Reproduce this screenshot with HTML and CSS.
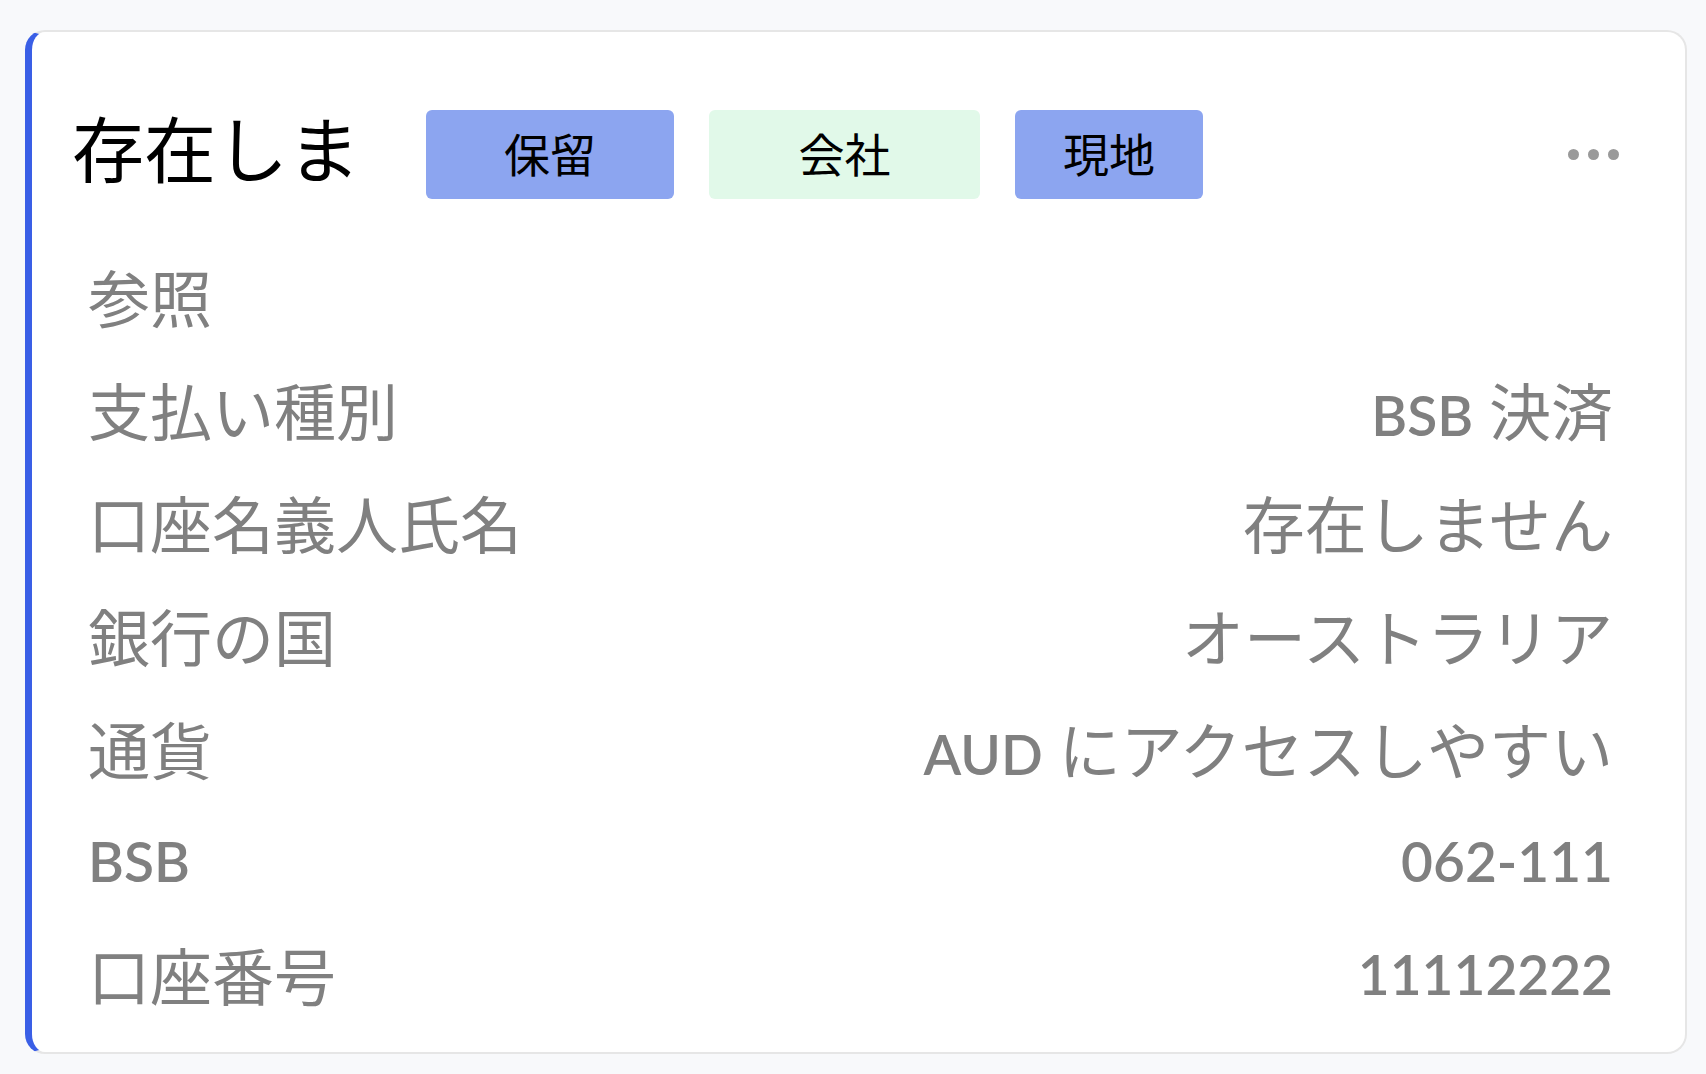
FILE: index.html
```html
<!DOCTYPE html>
<html lang="ja">

<head>
    <meta charset="UTF-8">
    <meta name="viewport" content="width=device-width, initial-scale=1.0">
    <title>支払先</title>
    <link rel="stylesheet" href="styles.css">
</head>

<body>

    <div class="card">
        <div class="cardHeader">
            <h2 class="cardTitle">存在しま</h2>
            <span class="tag tagBlue tagWide">保留</span>
            <span class="tag tagGreen tagWider">会社</span>
            <span class="tag tagBlue tagNarrow">現地</span>
            <div class="moreMenu">
                <span class="dot"></span>
                <span class="dot"></span>
                <span class="dot"></span>
            </div>
        </div>

        <div class="row">
            <span class="label">参照</span>
            <span class="value"></span>
        </div>
        <div class="row">
            <span class="label">支払い種別</span>
            <span class="value"><span class="latin">BSB</span> 決済</span>
        </div>
        <div class="row">
            <span class="label">口座名義人氏名</span>
            <span class="value">存在しません</span>
        </div>
        <div class="row">
            <span class="label">銀行の国</span>
            <span class="value">オーストラリア</span>
        </div>
        <div class="row">
            <span class="label">通貨</span>
            <span class="value"><span class="latin">AUD</span> にアクセスしやすい</span>
        </div>
        <div class="row">
            <span class="label latin">BSB</span>
            <span class="value latin">062-111</span>
        </div>
        <div class="row">
            <span class="label">口座番号</span>
            <span class="value latin">11112222</span>
        </div>
    </div>

</body>

</html>
```

FILE: styles.css
```css
body {
    font-family: "Lato", "Noto Sans CJK JP", sans-serif;
    margin: 0;
    padding: 30px 19px 21px 25px;
    background-color: #f8f9fb;
}

.card {
    background-color: white;
    border: 2px solid #e6e6e6;
    border-left: 7px solid #3a5fe6;
    border-radius: 20px;
    height: 1024px;
    box-sizing: border-box;
    padding: 78px 66px 20px 40px;
}

.cardHeader {
    display: flex;
    align-items: center;
    height: 89px;
    margin-bottom: 40px;
}

.cardTitle {
    font-family: "Noto Sans CJK JP", sans-serif;
    font-size: 72px;
    font-weight: normal;
    color: black;
    margin: 0 66px 18px 0;
    line-height: 1;
}

.tag {
    display: flex;
    align-items: center;
    justify-content: center;
    height: 89px;
    box-sizing: border-box;
    padding-bottom: 5px;
    border-radius: 6px;
    font-family: "Noto Sans CJK JP", sans-serif;
    font-size: 46px;
    color: black;
    margin-right: 35px;
}

.tagBlue {
    background-color: #8ca5f0;
}

.tagGreen {
    background-color: #e1f9e9;
}

.tagWide {
    width: 248px;
}

.tagWider {
    width: 271px;
}

.tagNarrow {
    width: 188px;
}

.moreMenu {
    margin-left: auto;
    display: flex;
    gap: 9px;
}

.dot {
    width: 11px;
    height: 11px;
    border-radius: 50%;
    background-color: #9a9a9a;
}

.row {
    display: flex;
    justify-content: space-between;
    align-items: center;
    height: 113px;
    padding: 0 6px 0 16px;
    color: #808080;
    font-size: 62px;
}

.label,
.value {
    font-family: "Lato", "Noto Sans CJK JP", sans-serif;
    white-space: nowrap;
}

.latin {
    font-size: 55px;
    font-weight: 600;
}
```
